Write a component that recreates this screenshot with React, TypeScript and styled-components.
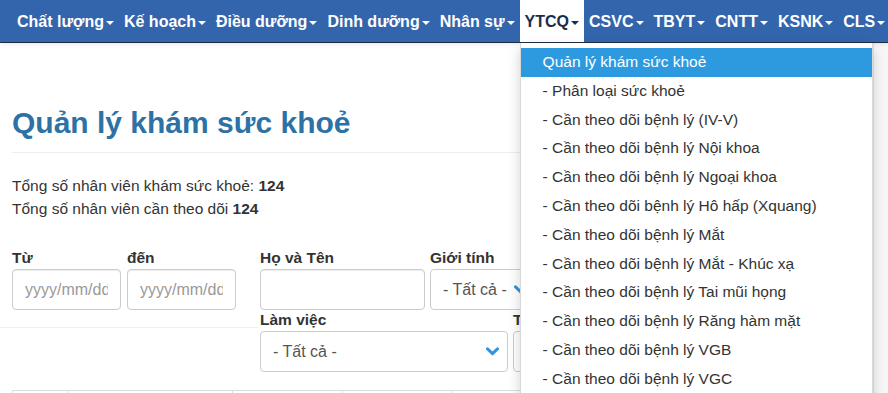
import React from "react";
import styled, { createGlobalStyle } from "styled-components";

const GlobalStyle = createGlobalStyle`
  html, body {
    margin: 0;
    padding: 0;
    overflow: hidden;
    background: #fff;
  }
  * { box-sizing: border-box; }
  body {
    font-family: "Liberation Sans", Arial, Helvetica, sans-serif;
    color: #333;
  }
`;

const Page = styled.div`
  height: 100vh;
  display: flex;
  flex-direction: column;
  overflow: hidden;
`;

const Nav = styled.nav`
  position: relative;
  z-index: 10;
  flex: none;
  display: flex;
  align-items: stretch;
  height: 43px;
  padding-left: 12px;
  background: #3365ad;
  border-bottom: 1px solid #1f2d47;
  box-shadow: 0 1px 4px rgba(0, 0, 0, 0.1);
`;

const NavItem = styled.div<{ $active?: boolean }>`
  position: relative;
  display: flex;
  align-items: center;
  padding: 1px 5px 0;
  font-size: 16px;
  font-weight: bold;
  white-space: nowrap;
  color: ${(p) => (p.$active ? "#1c2c4c" : "#fff")};
  background: ${(p) => (p.$active ? "#fff" : "transparent")};
`;

const Caret = styled.span`
  display: inline-block;
  width: 0;
  height: 0;
  margin-left: 2px;
  margin-top: 2px;
  border-top: 4px solid currentColor;
  border-left: 4px solid transparent;
  border-right: 4px solid transparent;
`;

const Menu = styled.ul`
  position: absolute;
  top: calc(100% + 1px);
  left: 0;
  width: 353px;
  margin: 0;
  padding: 5px 0;
  list-style: none;
  background: #fff;
  border: 1px solid rgba(0, 0, 0, 0.15);
  border-top: 0;
  box-shadow: 0 6px 12px rgba(0, 0, 0, 0.175);
  font-size: 15.5px;
  font-weight: normal;
  color: #333;
`;

const MenuItem = styled.li<{ $active?: boolean }>`
  padding: 0 22px;
  line-height: 28.8px;
  white-space: nowrap;
  background: ${(p) => (p.$active ? "#2d9ae0" : "transparent")};
  color: ${(p) => (p.$active ? "#fff" : "#333")};
`;

const Body = styled.div`
  flex: 1;
  display: flex;
  min-height: 0;
`;

const Main = styled.main`
  flex: 1;
  min-width: 0;
  padding: 0 12px;
  overflow: hidden;
`;

const ScrollTrack = styled.div`
  flex: none;
  width: 15px;
  background: #f7f7f7;
  border-left: 1px solid #e6e6e6;
`;

const PageHeader = styled.div`
  margin-top: 63px;
  padding-bottom: 13px;
  border-bottom: 1px solid #eee;
`;

const Title = styled.h1`
  margin: 0;
  font-size: 30px;
  line-height: 33px;
  font-weight: bold;
  color: #2d72a7;
`;

const Stats = styled.div`
  margin-top: 21px;
  font-size: 15.5px;
  line-height: 23px;
`;

const StatLine = styled.div``;

const Filters = styled.div`
  margin-top: 28px;
  display: flex;
  gap: 24px;
`;

const LeftGroup = styled.div`
  display: flex;
  flex-direction: column;
  flex: none;
  width: 224px;
`;

const FieldRow = styled.div<{ $gap?: number }>`
  display: flex;
  gap: ${(p) => p.$gap ?? 5}px;
`;

const Divider = styled.div`
  margin: 17px -22px 0 -12px;
  border-top: 1px solid #f0f0f0;
`;

const RightGroup = styled.div`
  display: flex;
  flex-direction: column;
  flex: none;
`;

const Field = styled.div<{ $w: number }>`
  width: ${(p) => p.$w}px;
  flex: none;
`;

const Label = styled.label`
  display: block;
  font-size: 15.5px;
  font-weight: bold;
  line-height: 20px;
  margin-bottom: 1px;
  white-space: nowrap;
`;

const TextInput = styled.input`
  display: block;
  width: 100%;
  height: 41px;
  padding: 0 12px;
  font-family: inherit;
  font-size: 16px;
  color: #555;
  background: #fff;
  border: 1px solid #ccc;
  border-radius: 4px;
  box-shadow: inset 0 1px 1px rgba(0, 0, 0, 0.075);
  outline: none;
  &::placeholder {
    color: #999;
  }
`;

const SelectBox = styled.div`
  display: flex;
  align-items: center;
  justify-content: space-between;
  height: 41px;
  padding: 0 8px 0 12px;
  font-size: 16px;
  color: #555;
  background: #fff;
  border: 1px solid #ccc;
  border-radius: 4px;
  white-space: nowrap;
  overflow: hidden;
`;

const Chevron = () => (
  <svg width="13" height="9" viewBox="0 0 13 9" style={{ flex: "none" }}>
    <polyline
      points="1.5,1.8 6.5,6.6 11.5,1.8"
      fill="none"
      stroke="#2e96e0"
      strokeWidth="3"
      strokeLinecap="round"
      strokeLinejoin="round"
    />
  </svg>
);

const Table = styled.table`
  margin-top: 18px;
  width: 100%;
  border-collapse: collapse;
  table-layout: fixed;
`;

const Th = styled.th<{ $w?: number }>`
  width: ${(p) => (p.$w ? `${p.$w}px` : "auto")};
  height: 38px;
  border: 1px solid #ddd;
`;

const navItems = [
  "Chất lượng",
  "Kế hoạch",
  "Điều dưỡng",
  "Dinh dưỡng",
  "Nhân sự",
  "YTCQ",
  "CSVC",
  "TBYT",
  "CNTT",
  "KSNK",
  "CLS",
];

const menuItems = [
  "Quản lý khám sức khoẻ",
  "- Phân loại sức khoẻ",
  "- Cần theo dõi bệnh lý (IV-V)",
  "- Cần theo dõi bệnh lý Nội khoa",
  "- Cần theo dõi bệnh lý Ngoại khoa",
  "- Cần theo dõi bệnh lý Hô hấp (Xquang)",
  "- Cần theo dõi bệnh lý Mắt",
  "- Cần theo dõi bệnh lý Mắt - Khúc xạ",
  "- Cần theo dõi bệnh lý Tai mũi họng",
  "- Cần theo dõi bệnh lý Răng hàm mặt",
  "- Cần theo dõi bệnh lý VGB",
  "- Cần theo dõi bệnh lý VGC",
];

const Select = ({ value }: { value: string }) => (
  <SelectBox>
    <span>{value}</span>
    <Chevron />
  </SelectBox>
);

export default function App() {
  return (
    <>
      <GlobalStyle />
      <Page>
        <Nav>
          {navItems.map((item) => {
            const active = item === "YTCQ";
            return (
              <NavItem key={item} $active={active}>
                {item}
                <Caret />
                {active && (
                  <Menu>
                    {menuItems.map((m, i) => (
                      <MenuItem key={m} $active={i === 0}>
                        {m}
                      </MenuItem>
                    ))}
                  </Menu>
                )}
              </NavItem>
            );
          })}
        </Nav>
        <Body>
          <Main>
            <PageHeader>
              <Title>Quản lý khám sức khoẻ</Title>
            </PageHeader>
            <Stats>
              <StatLine>
                Tổng số nhân viên khám sức khoẻ: <b>124</b>
              </StatLine>
              <StatLine>
                Tổng số nhân viên cần theo dõi <b>124</b>
              </StatLine>
            </Stats>
            <Filters>
              <LeftGroup>
                <FieldRow $gap={6}>
                  <Field $w={109}>
                    <Label>Từ</Label>
                    <TextInput placeholder="yyyy/mm/dd" />
                  </Field>
                  <Field $w={109}>
                    <Label>đến</Label>
                    <TextInput placeholder="yyyy/mm/dd" />
                  </Field>
                </FieldRow>
                <Divider />
              </LeftGroup>
              <RightGroup>
                <FieldRow>
                  <Field $w={165}>
                    <Label>Họ và Tên</Label>
                    <TextInput />
                  </Field>
                  <Field $w={106}>
                    <Label>Giới tính</Label>
                    <Select value="- Tất cả -" />
                  </Field>
                </FieldRow>
                <FieldRow>
                  <Field $w={248}>
                    <Label>Làm việc</Label>
                    <Select value="- Tất cả -" />
                  </Field>
                  <Field $w={160}>
                    <Label>Trạng thái</Label>
                    <Select value="- Tất cả -" />
                  </Field>
                </FieldRow>
              </RightGroup>
            </Filters>
            <Table>
              <thead>
                <tr>
                  <Th $w={55} />
                  <Th $w={165} />
                  <Th $w={110} />
                  <Th $w={110} />
                  <Th $w={110} />
                  <Th />
                </tr>
              </thead>
            </Table>
          </Main>
          <ScrollTrack />
        </Body>
      </Page>
    </>
  );
}
